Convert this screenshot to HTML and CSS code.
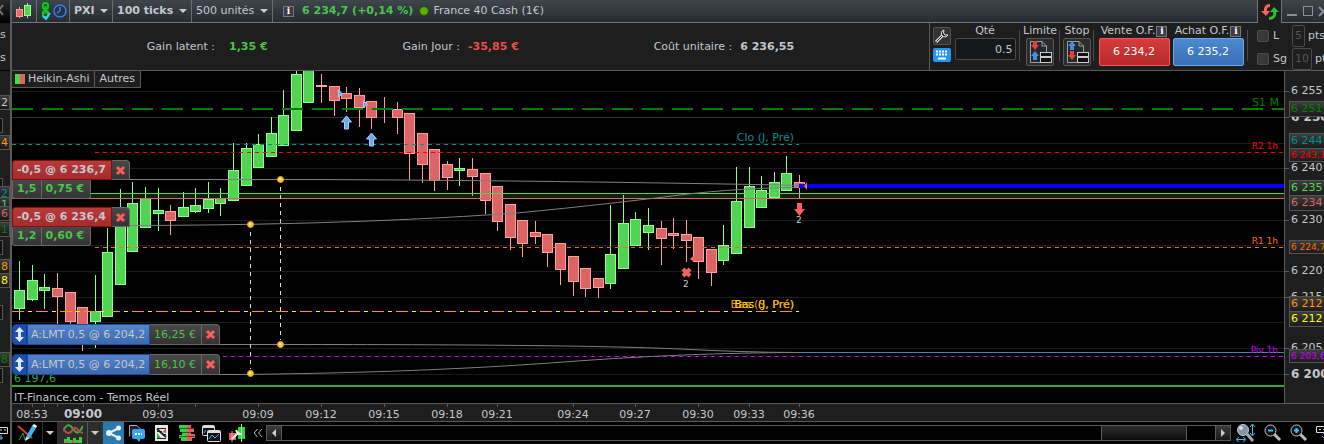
FILE: index.html
```html
<!DOCTYPE html>
<html lang="fr">
<head>
  <meta charset="UTF-8" />
  <meta name="viewport" content="width=device-width, initial-scale=1.0" />
  <title>PXI - France 40 Cash (1€)</title>
  <link rel="stylesheet" href="styles.css">
</head>
<body>
  <div class="workspace">
    <!-- edge of the neighbour window -->
    <aside class="neighbour">
      <div class="neighbour-title"><svg width="10" height="22"><path d="M3 5 L-1 10 L3 15" stroke="#777" stroke-width="2" fill="none" /></svg></div>
      <div class="neighbour-info"><span>s</span><span>s</span></div>
      <div class="neighbour-axis" id="neighbourAxis"></div>
      <div class="neighbour-tools"><svg width="10" height="22"><path d="M0 5.500 H7.500 V11.500 H0 M0 8 H2 M4 8 H6" stroke="#ddd" fill="none" /><path d="M1 13 V18 M0 16 H3" stroke="#3ac0ff" /></svg></div>
    </aside>

    <main class="window">
      <header class="titlebar">
        <button class="title-cell cell-candles" aria-label="Style">
          <svg width="18" height="18"><path d="M4.500 5 V16" stroke="#ff9a9a" /><rect x="1.500" y="7.500" width="6" height="7" fill="#e66" stroke="#ff9a9a" /><path d="M12.500 1 V16" stroke="#9f9" /><rect x="9.500" y="3.500" width="6" height="10" fill="#52d452" stroke="#9f9" /></svg>
        </button>
        <div class="title-cell cell-link">
          <button aria-label="Lier"><svg width="12" height="20"><g fill="none" stroke="#0a5a14" stroke-width="4"><rect x="3" y="2" width="5" height="6" rx="2" /><rect x="3" y="10" width="5" height="6" rx="2" /></g><g fill="none" stroke="#1fc030" stroke-width="2"><rect x="3" y="2" width="5" height="6" rx="2" /><rect x="3" y="10" width="5" height="6" rx="2" /><path d="M5.500 5 V13" /></g><path d="M3 15 L6 18 L10 12" fill="none" stroke="#45c8ff" stroke-width="2" /></svg></button>
          <button aria-label="Horaires"><svg width="14" height="14"><circle cx="7" cy="7" r="6" fill="#1f3550" stroke="#3d7be0" stroke-width="1.500" /><path d="M7 3 V7 L4 9" fill="none" stroke="#6aa4ff" /></svg></button>
        </div>
        <label class="title-cell drop strong"><select aria-label="Valeur"><option>PXI</option></select></label>
        <label class="title-cell drop strong"><select aria-label="Unité de temps"><option>100 ticks</option></select></label>
        <label class="title-cell drop"><select aria-label="Historique"><option>500 unités</option></select></label>
        <div class="quote">
          <button class="info" aria-label="Information">i</button>
          <span class="quote-price">6 234,7 (+0,14 %)</span>
          <span class="status"></span>
          <span class="quote-name">France 40 Cash (1€)</span>
        </div>
        <button class="refresh" aria-label="Synchroniser">
          <svg width="20" height="18"><path d="M10 2.500 C6 2.500 5 5 5.500 9" stroke="#ff6060" stroke-width="3" fill="none" /><path d="M1 8 L10 8 L6 13 Z" fill="#ff6060" /><path d="M9 15.500 C14 15.500 15.500 12 14.500 8" stroke="#25c22c" stroke-width="3" fill="none" /><path d="M10 9 L19 9 L14 4 Z" fill="#25c22c" /></svg>
        </button>
        <div class="window-buttons">
          <button aria-label="Réduire"><svg width="12" height="14"><path d="M1 11 H11" stroke="#8a9096" stroke-width="2" /></svg></button>
          <button aria-label="Agrandir"><svg width="12" height="14"><rect x="1.500" y="2.500" width="9" height="9" fill="none" stroke="#8a9096" /></svg></button>
          <button aria-label="Fermer"><svg width="12" height="14"><path d="M1 3 L10 12 M10 3 L1 12" stroke="#8a9096" stroke-width="2" /></svg></button>
        </div>
      </header>

      <section class="infobar">
        <dl class="gains">
          <div><dt>Gain latent :</dt><dd class="up wide">1,35 €</dd></div>
          <div><dt>Gain Jour :</dt><dd class="down">-35,85 €</dd></div>
          <div><dt>Coût unitaire :</dt><dd>6 236,55</dd></div>
        </dl>

        <form class="order">
          <div class="order-tools">
            <button type="button" class="tool-wrench" aria-label="Réglages"><svg width="16" height="16"><path d="M2 14 L9 7" stroke="#ddd" stroke-width="3" /><path d="M2.500 13.500 L9 7" stroke="#222" /><path d="M10 2 A3.500 3.500 0 1 0 14 7 L11 7 L9.500 5 Z" fill="#222" stroke="#eee" /></svg></button>
            <button type="button" class="tool-keys" aria-label="Clavier"><svg width="16" height="12"><path d="M2 2.500 H14 M2 5.500 H14" stroke="#fff" stroke-width="2" stroke-dasharray="2 1" /><path d="M4 9.500 H12" stroke="#fff" stroke-width="2" /></svg></button>
          </div>
          <div class="order-field qty"><label for="qty">Qté</label><input id="qty" type="text" value="0.5"></div>
          <div class="order-field sep"><span>Limite</span>
            <button type="button" class="order-type" aria-label="Ordre limite"><svg width="24" height="24"><path d="M2.500 1.500 H14 L18.500 6 V22.500 H2.500 Z" fill="#22282c" stroke="#9aa0a4" /><path d="M14 1.500 V6 H18.500" fill="none" stroke="#9aa0a4" /><path d="M5 1 H9 V5 H11 L7 10 L3 5 H5 Z" fill="#e84040" /><path d="M5 20 H9 V16 H11 L7 11 L3 16 H5 Z" fill="#4a8ae0" /><rect x="12.500" y="12.500" width="11" height="10" fill="#111" stroke="#c8cccf" /><rect x="13" y="16" width="10" height="2" fill="#c8cccf" /></svg></button></div>
          <div class="order-field sep"><span>Stop</span>
            <button type="button" class="order-type" aria-label="Ordre stop"><svg width="24" height="24"><path d="M2.500 1.500 H14 L18.500 6 V22.500 H2.500 Z" fill="#22282c" stroke="#9aa0a4" /><path d="M14 1.500 V6 H18.500" fill="none" stroke="#9aa0a4" /><path d="M5 10 H9 V6 H11 L7 1 L3 6 H5 Z" fill="#4a8ae0" /><path d="M5 11 H9 V15 H11 L7 20 L3 15 H5 Z" fill="#e84040" /><rect x="12.500" y="12.500" width="11" height="10" fill="#111" stroke="#c8cccf" /><rect x="13" y="16" width="10" height="2" fill="#c8cccf" /></svg></button></div>
          <div class="order-field sep deal"><span class="deal-label">Vente O.F.<button type="button" class="info" aria-label="Aide vente">i</button></span><button type="button" class="sell">6 234,2</button></div>
          <div class="order-field deal"><span class="deal-label">Achat O.F.<button type="button" class="info" aria-label="Aide achat">i</button></span><button type="button" class="buy">6 235,2</button></div>
          <div class="stops">
            <div><input type="checkbox" id="limit"><label for="limit">L</label><input type="text" class="pts" value="5" size="1" aria-label="Limite en points"><span>pts</span></div>
            <div><input type="checkbox" id="stop"><label for="stop">Sg</label><input type="text" class="pts pts-wide" value="10" size="2" aria-label="Stop en points"><span>pts</span></div>
          </div>
        </form>
      </section>

      <section class="chart">
        <div class="plot">
          <svg class="canvas" id="canvas" width="100%" height="332"></svg>

          <div class="legend">
            <button><svg width="10" height="10"><rect width="5" height="10" fill="#52d452" /><rect x="5" width="5" height="10" fill="#dc6464" /></svg>Heikin-Ashi</button><button>Autres</button>
          </div>

          <div class="position first">
            <div class="position-row"><span class="sold">-0,5 @ 6 236,7</span><button class="close" aria-label="Fermer la position"><svg width="11" height="11"><path d="M2 2 L9 9 M9 2 L2 9" stroke="#ff5c5c" stroke-width="3" /></svg></button></div>
            <div class="position-row result"><span>1,5</span><span>0,75 €</span></div>
          </div>
          <div class="position second">
            <div class="position-row"><span class="sold">-0,5 @ 6 236,4</span><button class="close" aria-label="Fermer la position"><svg width="11" height="11"><path d="M2 2 L9 9 M9 2 L2 9" stroke="#ff5c5c" stroke-width="3" /></svg></button></div>
            <div class="position-row result"><span>1,2</span><span>0,60 €</span></div>
          </div>

          <div class="pending third">
            <button class="grip" aria-label="Déplacer l'ordre"><svg width="9" height="15"><path d="M4.500 0 L9 5 H6 V10 H9 L4.500 15 L0 10 H3 V5 H0 Z" fill="#e4e8f0" /></svg></button>
            <span class="pending-label">A:LMT 0,5 @ 6 204,2</span><span class="pending-gain">16,25 €</span>
            <button class="close" aria-label="Annuler l'ordre"><svg width="11" height="11"><path d="M2 2 L9 9 M9 2 L2 9" stroke="#ff5c5c" stroke-width="3" /></svg></button>
          </div>
          <div class="pending fourth">
            <button class="grip" aria-label="Déplacer l'ordre"><svg width="9" height="15"><path d="M4.500 0 L9 5 H6 V10 H9 L4.500 15 L0 10 H3 V5 H0 Z" fill="#e4e8f0" /></svg></button>
            <span class="pending-label">A:LMT 0,5 @ 6 204,2</span><span class="pending-gain">16,10 €</span>
            <button class="close" aria-label="Annuler l'ordre"><svg width="11" height="11"><path d="M2 2 L9 9 M9 2 L2 9" stroke="#ff5c5c" stroke-width="3" /></svg></button>
          </div>
        </div>
        <div class="price-axis" id="priceAxis"></div>
      </section>

      <section class="time-axis"><svg id="timeAxis" width="100%" height="17"></svg></section>

      <footer class="toolbar">
        <button class="tb tb-pencil" aria-label="Dessiner"><svg width="20" height="18"><path d="M1 2 L15 14" stroke="#f03030" stroke-width="2" /><path d="M2 16 L6 9 L8 16 L13 12" stroke="#20a030" fill="none" /><path d="M9 13 L15 2 L19 4 L13 14 Z" fill="#3cb4f4" /><path d="M9 13 L13 14 L8 17 Z" fill="#f2e8e0" /><path d="M15 2 L17 0 L20 2 L19 4 Z" fill="#fff" /></svg></button>
        <button class="tb tb-caret" aria-label="Outils de dessin"></button>
        <button class="tb tb-indic lit" aria-label="Indicateurs"><svg width="20" height="20"><path d="M0 8 C5 -2 8 3 11 7 C14 12 17 9 20 3" stroke="#35b040" stroke-width="2" fill="none" /><path d="M0 5 C4 13 8 10 10 6 C13 2 16 10 20 10" stroke="#c04848" stroke-width="2" fill="none" /><path d="M1 20 V16 H4 V14 H7 V17 H10 V15 H13 V17 H16 V14 H19 V20 Z" fill="#35d040" /><path d="M4 18 V20 M10 17 V20 M14 18 V20" stroke="#e05050" stroke-width="2" /></svg></button>
        <button class="tb tb-caret lit" aria-label="Liste des indicateurs"></button>
        <button class="tb tb-share" aria-label="Partager"><svg width="16" height="16"><path d="M13 3 L3 8 L13 13" stroke="#e8f2fa" stroke-width="2" fill="none" /><g fill="#e8f2fa"><circle cx="12.500" cy="3" r="2.500" /><circle cx="3" cy="8" r="3" /><circle cx="12.500" cy="13" r="2.500" /></g></svg></button>
        <button class="tb tb-icon" aria-label="Messages"><svg width="18" height="18"><path d="M1.500 12.500 V1.500 H9 L12.500 5" fill="#222" stroke="#aaa" /><rect x="4" y="5" width="13" height="10" rx="2" fill="#38a6f4" /><path d="M8 14 L11 18 L13 14 Z" fill="#38a6f4" /><path d="M7 10 H14" stroke="#fff" stroke-width="2" stroke-dasharray="2 1" /></svg></button>
        <button class="tb tb-icon" aria-label="Ordres"><svg width="18" height="18"><rect x="2" y="1" width="13" height="16" fill="#e8e8e8" /><path d="M4 4.500 H13 M4 7.500 H9 M9 10.500 H13 M4 14.500 H13" stroke="#222" /><path d="M4 5 L13 13" stroke="#222" stroke-width="2" /><path d="M10 8 L13 4 V9 Z" fill="#e04040" /><path d="M4 14 V9 L8 14 Z" fill="#28b838" /></svg></button>
        <button class="tb tb-icon" aria-label="Carnet"><svg width="18" height="18"><path d="M1 1 H9 V17 H3 V14 H1 V11 H4 V8 H2 V5 H1 Z" fill="#35d045" /><path d="M9 1 H13 V4 H16 V8 H13 V10 H17 V14 H14 V17 H9 Z" fill="#e45c5c" /><path d="M1 4.500 H17 M1 8.500 H17 M1 12.500 H17" stroke="#000" stroke-opacity="0.5" /></svg></button>
        <button class="tb tb-icon" aria-label="Fenêtres"><svg width="19" height="18"><g fill="#111" stroke="#ddd"><rect x="0.500" y="1.500" width="12" height="10" rx="1" /><rect x="5.500" y="6.500" width="13" height="11" rx="1" /></g><path d="M1 3 H12 M6 8 H18" stroke="#ddd" stroke-width="2" /><path d="M7 15 L10 11 L13 14 L17 10 M2 9 L4 6" stroke="#3ab4f4" fill="none" /></svg></button>
        <button class="tb tb-icon" aria-label="Réglages du graphique"><svg width="18" height="18"><rect x="1" y="9" width="7" height="7" fill="#e45c5c" /><path d="M4 7 V18" stroke="#f99" /><rect x="10" y="3" width="7" height="12" fill="#35d045" /><path d="M13.500 0 V18" stroke="#8f8" /><path d="M4 15 L11 8 M8 6 L10 10 L14 10" stroke="#eee" stroke-width="2" fill="none" /></svg></button>
        <button class="tb tb-fold" aria-label="Replier"><svg width="10" height="10"><path d="M4.500 1 L1 5 L4.500 9 M9 1 L5.500 5 L9 9" stroke="#bbb" fill="none" /></svg></button>
        <div class="scrollbar">
          <button class="scroll-step" aria-label="Précédent"><svg width="6" height="8"><path d="M5 0 V8 L1 4 Z" fill="#ccc" /></svg></button>
          <div class="scroll-track"><div class="scroll-thumb"></div></div>
          <button class="scroll-step" aria-label="Suivant"><svg width="6" height="8"><path d="M1 0 V8 L5 4 Z" fill="#ccc" /></svg></button>
        </div>
        <div class="zoom-tools">
          <button aria-label="Ajuster"><svg width="20" height="18"><path d="M11 10 L17 17" stroke="#aaa" stroke-width="3" /><circle cx="7" cy="6" r="5.500" fill="#8494a4" stroke="#ccc" /><circle cx="5" cy="4" r="2" fill="#d4dce4" /><path d="M16.500 1 V11 M14 3 L16.500 0 L19 3 M14 9 L16.500 12 L19 9 M1 15.500 H9 M3 13 L0 15.500 L3 18 M7 13 L10 15.500 L7 18" stroke="#3ac0ff" fill="none" /></svg></button>
          <button aria-label="Zoom arrière"><svg width="18" height="18"><path d="M10 10 L16 16" stroke="#bbb" stroke-width="3" /><circle cx="6.500" cy="6.500" r="5.500" fill="#111" stroke="#ccc" /><path d="M4 6.500 H9" stroke="#3ac0ff" stroke-width="2" /></svg></button>
          <button aria-label="Zoom avant"><svg width="18" height="18"><path d="M10 10 L16 16" stroke="#bbb" stroke-width="3" /><circle cx="6.500" cy="6.500" r="5.500" fill="#111" stroke="#ccc" /><path d="M4 6.500 H9 M6.500 4 V9" stroke="#3ac0ff" stroke-width="2" /></svg></button>
          <button aria-label="Clavier"><svg width="18" height="18"><path d="M0.500 2.500 H17.500 V8.500 H0.500 Z M3 5.500 H5 M7 5.500 H9" stroke="#ddd" fill="none" /><path d="M9 9 V14 M6 12 L9 15 L12 12" stroke="#3ac0ff" fill="none" /></svg></button>
        </div>
      </footer>
    </main>
  </div>

  <script src="chart.js"></script>
</body>
</html>
```

FILE: styles.css
```css
:root {
  --panel: #1e1e1e;
  --line: #5a5a5a;
  --text: #c4c8cc;
  --green: #4cc44c;
}

* {
  margin: 0;
  padding: 0;
  box-sizing: border-box;
}

body {
  background: #000;
  color: var(--text);
  font-family: "DejaVu Sans", sans-serif;
  font-size: 11px;
  line-height: 14px;
  overflow: hidden;
}

button, input, select {
  font: inherit;
  color: inherit;
  border: none;
  background: none;
}

button {
  display: flex;
  align-items: center;
  justify-content: center;
  cursor: pointer;
}

svg {
  display: block;
  flex: none;
}

.workspace {
  display: flex;
  min-height: 100vh;
}

/* neighbour window */
.neighbour {
  display: flex;
  flex-direction: column;
  width: 12px;
  flex: none;
  border-right: 2px solid var(--line);
  overflow: hidden;
  background: var(--panel);
}

.neighbour-title {
  height: 23px;
  background: linear-gradient(#2a2a2a, #000);
}

.neighbour-info {
  height: 48px;
  display: flex;
  flex-direction: column;
  gap: 9px;
  padding-top: 5px;
  border-bottom: 1px solid #000;
}

.neighbour-axis {
  flex: 1;
  position: relative;
}

.neighbour-axis span {
  position: absolute;
  left: -1px;
  width: 11px;
  height: 15px;
  padding-left: 2px;
  border: 1px solid #555;
  border-left: none;
  background: linear-gradient(#3a3a3a, #181818);
}

.neighbour-axis .box {
  width: 4px;
  background: #111;
}

.neighbour-tools {
  height: 22px;
  background: #000;
}

/* title bar */
.window {
  flex: 1;
  min-width: 0;
  display: flex;
  flex-direction: column;
}

.titlebar {
  display: flex;
  height: 23px;
  background: linear-gradient(#3e454b, #262c32);
  border-bottom: 1px solid #73777b;
}

.title-cell {
  display: flex;
  align-items: center;
  justify-content: center;
  border-right: 1px solid #6a6e72;
}

.cell-candles {
  width: 25px;
}

.cell-link {
  width: 33px;
  gap: 1px;
}

.drop {
  gap: 5px;
  padding: 0 4px;
}

.drop select {
  appearance: none;
  outline: none;
}

.drop::after,
.tb-caret::after {
  content: "";
  border: 4px solid transparent;
  border-top-color: #ccc;
  border-bottom: none;
}

.strong {
  font-weight: bold;
}

.quote {
  flex: 1;
  display: flex;
  align-items: center;
  padding-left: 10px;
  gap: 6px;
  white-space: nowrap;
}

.info {
  width: 11px;
  height: 11px;
  flex: none;
  border: 1px solid #777;
  background: #3a3c48;
  color: #fff;
  font: bold 9px "DejaVu Serif", serif;
}

.quote-price {
  color: var(--green);
  font-weight: bold;
  margin-left: 2px;
}

.status {
  width: 10px;
  height: 10px;
  flex: none;
  border-radius: 50%;
  background: #5cae00;
  border: 1px solid #2c4a08;
}

.quote-name {
  margin-left: -2px;
}

.refresh {
  width: 25px;
  height: 23px;
  background: var(--panel);
  border: 1px solid #73777b;
  border-width: 0 1px;
}

.window-buttons {
  display: flex;
  align-items: center;
  gap: 4px;
  width: 42px;
  padding-left: 4px;
  overflow: hidden;
}

/* gains and order entry */
.infobar {
  display: flex;
  height: 48px;
  background: var(--panel);
  border-bottom: 1px solid var(--line);
}

.gains {
  flex: 1;
  display: flex;
  align-items: center;
  justify-content: space-evenly;
  white-space: nowrap;
}

.gains div {
  display: flex;
  gap: 8px;
}

.gains dd {
  font-weight: bold;
}

.gains .wide {
  margin-left: 6px;
}

.gains .up {
  color: var(--green);
}

.gains .down {
  color: #f04c4c;
}

.order {
  display: flex;
  width: 395px;
  flex: none;
  padding-left: 3px;
  border-left: 1px solid var(--line);
  overflow: hidden;
  white-space: nowrap;
}

.order > div {
  flex: none;
}

.order-tools {
  display: flex;
  flex-direction: column;
  gap: 3px;
  padding-top: 4px;
  width: 20px;
}

.order-tools button {
  width: 18px;
  border-radius: 2px;
}

.tool-wrench {
  height: 18px;
  border: 1px solid #555;
  background: #333;
}

.tool-keys {
  height: 14px;
  background: #2298f4;
}

.order-field {
  display: flex;
  flex-direction: column;
  align-items: center;
  padding-top: 1px;
  position: relative;
}

.qty {
  width: 64px;
}

.qty input {
  width: 61px;
  height: 22px;
  padding-right: 2px;
  text-align: right;
  background: #15181b;
  border: 1px solid #4a4a4a;
  border-radius: 2px;
}

.sep {
  margin-left: 2px;
  padding-left: 4px;
}

.sep::before,
.stops::before {
  content: "";
  position: absolute;
  left: 0;
  top: 7px;
  width: 1px;
  height: 31px;
  background: #4a4a4a;
}

.order-type {
  width: 28px;
  height: 28px;
  border: 1px solid #555;
  border-radius: 2px;
  background: #2c2c2c;
}

.deal {
  width: 74px;
}

.deal.sep {
  width: 78px;
}

.deal-label {
  display: flex;
  align-items: center;
  gap: 1px;
}

.sell,
.buy {
  width: 71px;
  height: 28px;
  border-radius: 2px;
  color: #fff;
}

.sell {
  background: linear-gradient(#d63c3c, #b82828);
  border: 1px solid #ff5454;
}

.buy {
  background: linear-gradient(#4c88d0, #386eb6);
  border: 1px solid #6aa8f4;
}

.stops {
  display: flex;
  flex-direction: column;
  position: relative;
  margin-left: 2px;
  padding: 1px 0 0 10px;
}

.stops div {
  display: flex;
  align-items: center;
  height: 23px;
}

.stops label {
  width: 19px;
  margin-left: 4px;
}

.stops input[type="checkbox"] {
  appearance: none;
  width: 12px;
  height: 12px;
  border: 1px solid #4c4c4c;
  border-radius: 2px;
  background: #383838;
}

.stops .pts {
  width: 13px;
  height: 22px;
  text-align: center;
  color: #555;
  border: 1px solid #4a4a4a;
  border-radius: 2px;
}

.stops .pts-wide {
  width: 20px;
}

.stops div span {
  margin-left: 3px;
}

/* chart */
.chart {
  display: flex;
  background: #000;
}

.plot {
  position: relative;
  flex: 1;
  min-width: 0;
}

.canvas text {
  font-size: 11px;
}

.canvas .small {
  font-size: 9px;
}

.legend {
  position: absolute;
  top: -1px;
  left: 0;
  display: flex;
}

.legend button {
  height: 18px;
  padding: 0 4px 0 3px;
  gap: 3px;
  background: var(--panel);
  border: 1px solid var(--line);
  border-left: none;
}

.legend button + button {
  padding: 0 5px;
}

.position,
.pending {
  position: absolute;
  left: 0;
  white-space: nowrap;
}

.first {
  top: 89px;
}

.second {
  top: 136px;
}

.third {
  top: 253px;
}

.fourth {
  top: 283px;
}

.position-row {
  display: flex;
  font-weight: bold;
}

.sold {
  width: 100px;
  height: 20px;
  padding: 2px 4px;
  background: linear-gradient(#b83a3a, #a42c2c);
  border: 1px solid #8c0c0c;
  border-radius: 3px 0 0 0;
}

.close {
  width: 18px;
  height: 20px;
  background: linear-gradient(#484848, #343434);
  border: 1px solid #686868;
  border-left: none;
  border-radius: 0 4px 0 0;
}

.result {
  width: 79px;
  height: 19px;
  color: var(--green);
  background: linear-gradient(#484848, #343434);
  border: 1px solid #686868;
  border-top: none;
  border-radius: 0 0 3px 3px;
}

.result span {
  padding: 2px 4px;
}

.result span + span {
  border-left: 1px solid #686868;
}

.pending {
  display: flex;
  height: 21px;
}

.grip {
  width: 15px;
  background: #1c50ac;
  border: 1px solid #0c3c94;
  border-radius: 4px 0 0 4px;
}

.pending-label {
  width: 123px;
  padding: 3px 3px;
  background: linear-gradient(#5484c8, #3c68b0);
  border: 1px solid #184ca8;
}

.pending-gain {
  width: 52px;
  padding: 3px 4px;
  color: var(--green);
  background: linear-gradient(#484848, #343434);
  border: 1px solid #686868;
  border-left: none;
}

.pending .close {
  height: 21px;
}

.price-axis {
  position: relative;
  width: 40px;
  flex: none;
  background: var(--panel);
  border-left: 1px solid var(--line);
  overflow: hidden;
  white-space: pre;
}

.tick {
  position: absolute;
  left: 0;
  display: flex;
  align-items: center;
  gap: 2px;
  height: 14px;
}

.tick::before {
  content: "";
  width: 4px;
  height: 1px;
  background: var(--line);
}

.tick.major {
  font-size: 12px;
  font-weight: bold;
}

.badge {
  position: absolute;
  left: 4px;
  width: 50px;
  height: 16px;
  padding-left: 1px;
  background: linear-gradient(#3c3c3c, #1c1c1c);
  border: 1px solid #555;
}

.badge.small {
  height: 14px;
  font-size: 9px;
  line-height: 12px;
}

.time-axis {
  height: 19px;
  background: var(--panel);
  border: 1px solid var(--line);
  border-width: 1px 0;
}

.time-axis .major {
  font-size: 12px;
  font-weight: bold;
}

/* toolbar */
.toolbar {
  display: flex;
  align-items: center;
  height: 22px;
  background: #000;
}

.tb {
  flex: none;
  height: 22px;
}

.tb-pencil {
  width: 31px;
  border-right: 1px solid #333;
}

.tb-caret {
  width: 15px;
  border-right: 1px solid #333;
}

.tb-indic {
  width: 30px;
  border-right: 1px solid #555;
}

.lit {
  background: #2c2c2c;
}

.tb-share {
  width: 21px;
  background: #2a7ab0;
}

.tb-icon {
  width: 25px;
}

.tb-fold {
  width: 17px;
}

.scrollbar {
  flex: 1;
  display: flex;
  height: 16px;
  border: 1px solid var(--line);
}

.scroll-step {
  width: 15px;
  background: linear-gradient(#3c3c3c, #181818);
  border-right: 1px solid var(--line);
}

.scroll-step:last-child {
  border-right: none;
  border-left: 1px solid var(--line);
}

.scroll-track {
  flex: 1;
  display: flex;
  justify-content: flex-end;
  padding-right: 28px;
}

.scroll-thumb {
  width: 86px;
  background: linear-gradient(#2c2c2c, #0c0c0c);
  border: 1px solid var(--line);
  border-width: 0 1px;
}

.zoom-tools {
  display: flex;
  gap: 8px;
  width: 93px;
  padding-left: 5px;
  overflow: hidden;
}
```

FILE: chart.js
```js
const canvas = document.getElementById('canvas');
const UP = { fill: '#52d452', edge: '#8cff8c' };
const DOWN = { fill: '#dc6464', edge: '#ffa0a0' };

// centre x, high, body top, body bottom, low, direction
const candles = [
  [19, 261, 290, 309, 320, 1], [32, 265, 280, 300, 301, 1], [44, 274, 287, 291, 309, 1],
  [57, 273, 288, 297, 326, 0], [70, 292, 292, 322, 326, 0], [82, 307, 307, 326, 351, 0],
  [95, 275, 311, 322, 348, 1], [107, 228, 252, 317, 317, 1], [120, 189, 222, 285, 285, 1],
  [132, 182, 203, 252, 252, 1], [145, 187, 198, 228, 228, 1], [158, 188, 210, 214, 231, 1],
  [170, 205, 211, 221, 235, 0], [183, 192, 207, 217, 217, 1], [195, 188, 205, 212, 213, 1],
  [208, 182, 199, 209, 213, 1], [220, 188, 198, 204, 216, 1], [233, 143, 170, 201, 201, 1],
  [246, 143, 148, 186, 186, 1], [258, 134, 144, 168, 168, 1], [271, 117, 133, 157, 157, 1],
  [283, 90, 115, 146, 146, 1], [296, 71, 74, 131, 131, 1], [308, 70, 70, 103, 103, 1],
  [321, 74, 85, 87, 103, 0], [334, 86, 86, 101, 116, 0], [346, 87, 93, 99, 112, 0],
  [359, 88, 95, 108, 127, 0], [371, 101, 101, 118, 129, 0], [384, 97, 110, 110, 123, 0],
  [397, 102, 109, 118, 134, 0], [409, 113, 113, 154, 180, 0], [422, 133, 133, 165, 183, 0],
  [434, 149, 149, 181, 191, 0], [447, 161, 164, 178, 190, 0], [459, 158, 168, 171, 186, 1],
  [472, 158, 169, 177, 196, 0], [485, 173, 173, 201, 214, 0], [497, 186, 186, 222, 231, 0],
  [510, 204, 204, 238, 250, 0], [522, 220, 220, 244, 257, 0], [535, 221, 232, 237, 244, 0],
  [547, 234, 234, 253, 267, 0], [560, 243, 243, 270, 285, 0], [573, 256, 256, 282, 296, 0],
  [585, 268, 268, 289, 297, 0], [598, 278, 278, 288, 298, 0], [610, 205, 254, 284, 289, 1],
  [623, 195, 223, 269, 269, 1], [635, 212, 219, 246, 246, 1], [648, 208, 225, 233, 250, 1],
  [661, 221, 228, 239, 265, 0], [673, 218, 233, 236, 249, 0], [686, 220, 234, 241, 262, 0],
  [698, 237, 237, 262, 279, 0], [711, 249, 249, 273, 286, 0], [723, 225, 245, 261, 265, 1],
  [736, 167, 201, 254, 254, 1], [749, 167, 186, 228, 228, 1], [761, 176, 190, 208, 208, 1],
  [774, 172, 182, 198, 198, 1], [786, 156, 173, 191, 191, 1], [799, 175, 182, 188, 198, 0]
];

function rect(x, y, w, h, fill) {
  return `<rect x="${x}" y="${y}" width="${w}" height="${h}" fill="${fill}" />`;
}

// full width horizontal line, or up to x2
function hline(y, color, x1 = 12, x2 = '110%', dash = '', width = 1, offset = 0) {
  const mid = width % 2 ? y + 0.5 : y + width / 2;
  return `<line x1="${x1}" x2="${x2}" y1="${mid}" y2="${mid}" stroke="${color}" stroke-width="${width}" stroke-dasharray="${dash}" stroke-dashoffset="${offset}" />`;
}

function drawCandle([x, high, top, bottom, low, up]) {
  const c = up ? UP : DOWN;
  let out = rect(x, high, 1, low - high, c.edge);
  if (bottom > top) out += rect(x - 5, top, 11, bottom - top, c.edge);
  if (bottom - top > 2) out += rect(x - 4, top + 1, 9, bottom - top - 2, c.fill);
  return out;
}

function curve(d) {
  return `<path d="${d}" fill="none" stroke="#808080" />`;
}

function pin(x, y1, y2) {
  return `<line x1="${x + 0.5}" x2="${x + 0.5}" y1="${y1 + 8}" y2="${y2 - 4}" stroke="#d8d8d8" stroke-dasharray="4 4" />` +
    [y1, y2].map(y => `<circle cx="${x + 0.5}" cy="${y + 0.5}" r="3" fill="#ffc83c" stroke="#e8a020" /><circle cx="${x}" cy="${y}" r="1" fill="#fff0c0" />`).join('');
}

function upArrow(x, y) {
  return `<path d="M${x + 0.5} ${y} l5 6 h-3 v7 h-4 v-7 h-3 Z" fill="#6ca8f4" stroke="#a0d0ff" />`;
}

let svg = '<g transform="translate(-12 -71)">';
[91, 117, 143, 168, 194, 220, 245, 271, 297, 322, 348, 374].forEach(y => {
  svg += hline(y, y === 117 ? '#303030' : '#1b1b1b');
});
svg += `<rect x="12" y="194" width="110%" height="4" fill="#0e200e" />`;
svg += candles.map(drawCandle).join('');

svg += hline(108, '#008000', 12, '110%', '21 9', 2);
svg += hline(144, '#009090', 12, 799, '4 4');
svg += hline(152, '#ff0000', 95, '110%', '4 4');
svg += hline(193, '#52d452') + hline(198, '#dc6464');
svg += hline(247, '#ff6c00', 95, '110%', '4 4');
svg += hline(311, '#ff9800', 12, 799, '12 12');
svg += hline(311, '#ffff00', 12, 799, '4 20', 1, -16);
svg += hline(352, '#4682b4', 799);
svg += hline(356, '#c800ff', 95, '110%', '4 4');
svg += hline(385, '#34ac34', 12, '110%', '', 2);

svg += curve('M90 179.5 H300 C480 180 680 183 806 185.5');
svg += curve('M90 225.5 C300 226 430 219 517 213 C580 207 640 200 680 195 C720 190 760 188 806 187');
svg += curve('M200 344.5 H290 C460 344.5 600 345.5 680 349 C720 351 760 352.5 799 352.5');
svg += curve('M200 374.5 H240 C380 373 480 368 550 363 C630 357 700 353 799 352.5');
svg += pin(280, 179, 344) + pin(250, 224, 373);
svg += hline(184, '#0000ff', 799, '110%', '', 4);

svg += upArrow(346, 116) + upArrow(371, 133);
svg += '<path d="M338.5 90 l4 4 l-4 3 Z M363.5 101 l4 3 l-4 4 Z" fill="#6ca8f4" stroke="#a0d0ff" />';
svg += '<path d="M694 255 v7 l-4 -3 Z M807 182 v8 l-3 -4 Z" fill="#f86868" />';
svg += '<path d="M797 203 h5 v6 h3 l-5.5 7 l-5.5 -7 h3 Z" fill="#f86060" />';
svg += '<path d="M683 269 l7 7 M690 269 l-7 7" stroke="#f86060" stroke-width="4" />';
svg += '<g fill="#ccc"><text class="small" x="683" y="287">2</text><text class="small" x="796" y="223">2</text></g>';
svg += '<g text-anchor="end"><text x="794" y="141" fill="#009090">Clo (J, Pré)</text>';
svg += '<text x="794" y="308" fill="#ffff00">Bas (J, Pré)</text><text x="794" y="308" fill="#ff9800">Bas (S, Pré)</text></g>';
svg += '<text x="14" y="382" fill="#34ac34">6 197,6</text><text x="14" y="401" fill="#c4c8cc">IT-Finance.com - Temps Réel</text></g>';

// line names against the right edge
svg += '<svg x="100%" overflow="visible"><g text-anchor="end">' +
  '<text x="-5" y="35" fill="#008000">S1 M</text>' +
  '<text class="small" x="-6" y="78" fill="#ff0000">R2 1h</text>' +
  '<text class="small" x="-6" y="173" fill="#ff6c00">R1 1h</text>' +
  '<text class="small" x="-6" y="282" fill="#c800ff">Piv 1h</text></g></svg>';
canvas.innerHTML = svg;

// price axis: label, y of the line, bold
const ticks = [
  ['6 255', 20], ['6 250', 46, 1], ['6 240', 97], ['6 230', 149], ['6 220', 200],
  ['6 215', 226], ['6 205', 277], ['6 200', 303, 1]
];
// label, top, colour, small
const badges = [
  ['6 251', 30, '#008000'], ['6 244', 62, '#009090'], ['6 243,1', 77, '#ff0000', 1],
  ['6 235', 109, '#52d452'], ['6 234', 124, '#dc6464'], ['6 224,7', 169, '#ff6c00', 1],
  ['6 212', 225, '#ff9800'], ['6 212', 240, '#ffff00'], ['6 203,6', 278, '#c800ff', 1]
];
document.getElementById('priceAxis').innerHTML =
  ticks.map(([t, y, major]) => `<span class="tick${major ? ' major' : ''}" style="top:${y - 7}px">${t}</span>`).join('') +
  badges.map(([t, y, c, s]) => `<span class="badge${s ? ' small' : ''}" style="top:${y}px;color:${c}">${t}</span>`).join('');

const neighbour = [
  ['2', 24, '#c4c8cc'], ['', 47], ['4', 64, '#ff9800'], ['', 107], ['2', 115, '#009090'], ['1', 126, '#52d452'],
  ['6', 135, '#dc6464'], ['1', 151, '#008000'], ['', 169], ['8', 188, '#ff9800'], ['8', 202, '#ffff00'],
  ['', 234], ['8', 281, '#008000'], ['', 297]
];
document.getElementById('neighbourAxis').innerHTML =
  neighbour.map(([t, y, c]) => `<span class="${t ? '' : 'box'}" style="top:${y}px;color:${c}">${t}</span>`).join('');

const times = [['08:53', 20], ['09:00', 71], ['09:03', 146], ['09:09', 246], ['09:12', 309], ['09:15', 372], ['09:18', 435],
  ['09:21', 485], ['09:24', 561], ['09:27', 623], ['09:30', 686], ['09:33', 737], ['09:36', 787]];
document.getElementById('timeAxis').innerHTML =
  [32, 45, 183].map(x => rect(x, 0, 1, 3, '#5a5a5a')).join('') +
  times.map(([t, x]) => rect(x, 0, 1, 3, '#5a5a5a') +
    `<text x="${x}" y="14" text-anchor="middle" fill="#c4c8cc"${t === '09:00' ? ' class="major"' : ''}>${t}</text>`).join('');
```
